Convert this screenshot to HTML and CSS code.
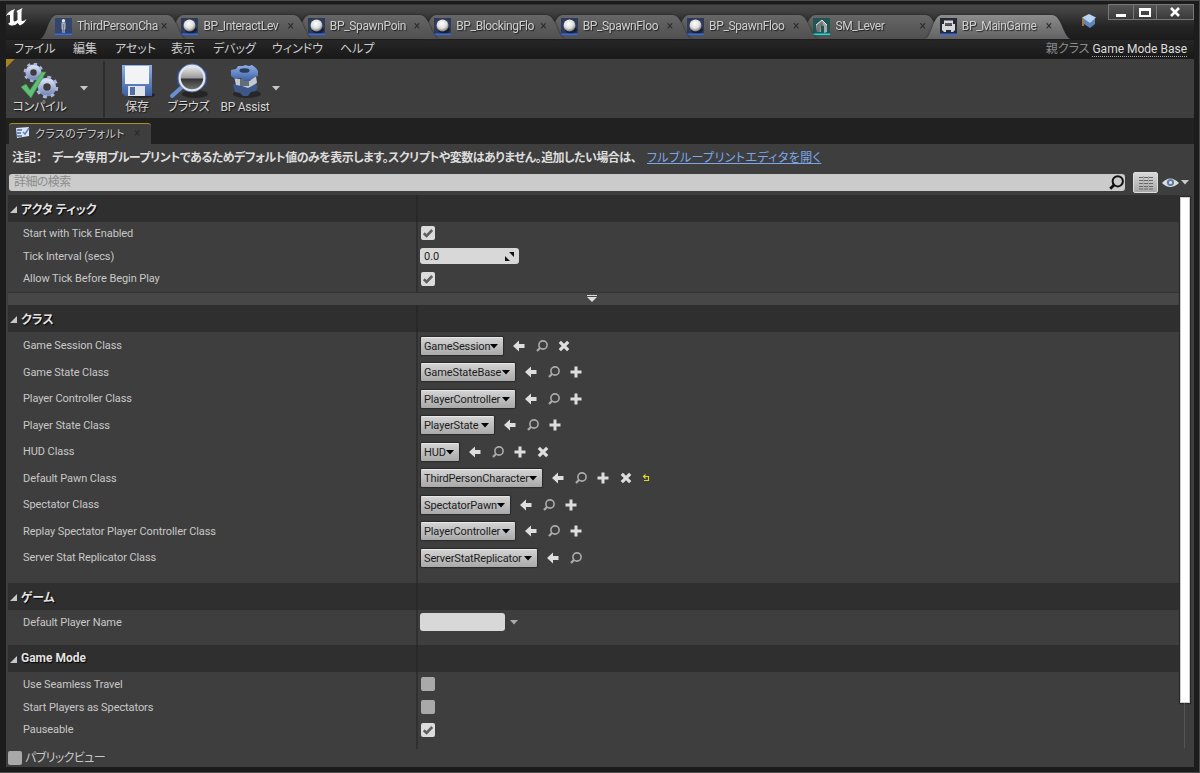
FILE: index.html
```
<!DOCTYPE html>
<html lang="ja">
<head>
  <meta charset="UTF-8" />
  <title>BP_MainGame</title>
  <link rel="stylesheet" href="styles.css">
</head>
<body>
  <!-- Shared icons -->
  <svg class="defs" width="0" height="0">
    <defs>
      <linearGradient id="gearFill" x1="0" y1="0" x2="0" y2="1">
        <stop offset="0" stop-color="#d3dcf3" /><stop offset="1" stop-color="#7e8fbc" />
      </linearGradient>
      <linearGradient id="blueFill" x1="0" y1="0" x2="0" y2="1">
        <stop offset="0" stop-color="#8fb0ea" /><stop offset="1" stop-color="#3d5ea0" />
      </linearGradient>
      <linearGradient id="lensFill" x1="0" y1="0" x2="0" y2="1">
        <stop offset="0" stop-color="#f0f0f0" /><stop offset=".5" stop-color="#9a9a9a" />
        <stop offset=".54" stop-color="#333" /><stop offset="1" stop-color="#777" />
      </linearGradient>
      <radialGradient id="ballFill" cx=".45" cy=".35" r=".65">
        <stop offset="0" stop-color="#fff" /><stop offset=".6" stop-color="#ddd" /><stop offset="1" stop-color="#777" />
      </radialGradient>
    </defs>
    <symbol id="i-ball" viewBox="0 0 17 17">
      <rect width="17" height="17" fill="#2e3a58" /><ellipse cx="10" cy="12" rx="6" ry="3.5" fill="#1a2030" />
      <circle cx="8.5" cy="7.5" r="6" fill="url(#ballFill)" /><rect y="15.500" width="17" height="1.500" fill="#2f6cf0" />
    </symbol>
    <symbol id="i-person" viewBox="0 0 17 17">
      <rect width="17" height="17" fill="#33456d" />
      <circle cx="8.5" cy="2.800" r="1.700" fill="#e4e6ea" /><path d="M6.300 4.500h4.400v6l-.9.500-.3 4H7.500l-.3-4-.9-.5z" fill="#b9bdc7" />
      <path d="M8.500 6v9M6.800 5v5M10.200 5v5" stroke="#596174" stroke-width=".7" /><rect y="15.500" width="17" height="1.500" fill="#2f6cf0" />
    </symbol>
    <symbol id="i-mesh" viewBox="0 0 17 17">
      <rect width="17" height="17" fill="#1f5553" />
      <path d="M3 7l6-5 5 5v7l-3 1V8L8 7v7H4z" fill="#a9a9a9" /><path d="M4 7l5-4 2 5-3-1-1 7H4z" fill="#777" />
      <path d="M3 7l6-5 5 5" fill="none" stroke="#ddd" /><rect y="15.500" width="17" height="1.500" fill="#19e0e0" />
    </symbol>
    <symbol id="i-pad" viewBox="0 0 17 17">
      <rect width="17" height="17" fill="#252a36" />
      <path d="M4 2.500h9V6H4zM2 6h3v2h7V6h3v6l-2 2h-2v-2H6v2H4l-2-2z" fill="#d8d8d8" />
      <path d="M5 5h7v2.500H5z" fill="#555a66" /><rect y="15.500" width="17" height="1.500" fill="#2f6cf0" />
    </symbol>
    <symbol id="i-arrow" viewBox="0 0 12 12"><path d="M0 6l6-5.500v3.500h5.500v4H6v3.500z" /></symbol>
    <symbol id="i-find" viewBox="0 0 12 12">
      <circle cx="7" cy="5" r="4.100" fill="none" stroke="currentColor" stroke-width="1.600" />
      <path d="M4.200 7.800L1 11" stroke="currentColor" stroke-width="2.200" />
    </symbol>
    <symbol id="i-plus" viewBox="0 0 12 12"><path d="M4.500 .5h3v4H11.500v3H7.500v4h-3v-4H.5v-3h4z" /></symbol>
    <symbol id="i-x" viewBox="0 0 12 12"><path d="M1.800 1.800l8.400 8.400M10.200 1.800l-8.400 8.400" stroke="currentColor" stroke-width="3.200" /></symbol>
    <symbol id="i-reset" viewBox="0 0 8 8"><path d="M2 2.500h4.500v4H2M3.500.500l-2 2 2 2" fill="none" stroke="currentColor" stroke-width="1.200" /></symbol>
    <symbol id="i-check" viewBox="0 0 14 14"><path d="M2.800 7.300l2.800 2.700L11.200 4" fill="none" stroke="#606060" stroke-width="2.600" /></symbol>
    <symbol id="i-down" viewBox="0 0 8 5"><path d="M0 0h8L4 4.500z" /></symbol>
    <symbol id="i-gear" viewBox="-10 -10 20 20">
      <circle r="5.400" fill="none" stroke="url(#gearFill)" stroke-width="4.600" />
      <circle r="8.200" fill="none" stroke="#a9b6dc" stroke-width="2.400" stroke-dasharray="3.200 3.240" />
    </symbol>
  </svg>

  <div class="window">
    <div class="titlebar">
      <svg class="logo" viewBox="0 0 22 20">
        <path d="M0 9Q2 4 9 2Q7.500 4 7.500 6V13.500Q8.500 15.500 11.500 13V5.500L10.500 4L16.500 1Q15.500 3 15.500 5V13.500Q17 15 20.500 12Q18.500 16.500 14 18.500L11.500 16Q9.500 19 5 18.500Q3 18 2 16.500Q4 16.500 4 14.500V8Q2.500 7 0 9Z" fill="#fff" />
      </svg>
      <div class="tabs">
        <div class="tab"><div class="tab-body"><svg class="tab-icon"><use href="#i-person" /></svg><span class="tab-name">ThirdPersonCha</span><span class="tab-close">×</span></div></div>
        <div class="tab"><div class="tab-body"><svg class="tab-icon"><use href="#i-ball" /></svg><span class="tab-name">BP_InteractLev</span><span class="tab-close">×</span></div></div>
        <div class="tab"><div class="tab-body"><svg class="tab-icon"><use href="#i-ball" /></svg><span class="tab-name">BP_SpawnPoin</span><span class="tab-close">×</span></div></div>
        <div class="tab"><div class="tab-body"><svg class="tab-icon"><use href="#i-ball" /></svg><span class="tab-name">BP_BlockingFlo</span><span class="tab-close">×</span></div></div>
        <div class="tab"><div class="tab-body"><svg class="tab-icon"><use href="#i-ball" /></svg><span class="tab-name">BP_SpawnFloo</span><span class="tab-close">×</span></div></div>
        <div class="tab"><div class="tab-body"><svg class="tab-icon"><use href="#i-ball" /></svg><span class="tab-name">BP_SpawnFloo</span><span class="tab-close">×</span></div></div>
        <div class="tab"><div class="tab-body"><svg class="tab-icon"><use href="#i-mesh" /></svg><span class="tab-name">SM_Lever</span><span class="tab-close">×</span></div></div>
        <div class="tab active"><div class="tab-body"><svg class="tab-icon"><use href="#i-pad" /></svg><span class="tab-name">BP_MainGame</span><span class="tab-close">×</span></div></div>
      </div>
      <svg class="tutorial" viewBox="0 0 16 16">
        <path d="M3 6v5l6 4 5-4V6z" fill="#5f86b8" /><path d="M1 4.500L8 1l7 3.500L9 10z" fill="#b9d3f2" />
        <path d="M2 5v8" stroke="#c9904f" stroke-width="1.500" />
      </svg>
      <div class="win-buttons">
        <span class="win-btn"><svg width="10" height="11"><rect y="7" width="10" height="3" fill="#fff" /></svg></span>
        <span class="win-btn mid"><svg width="12" height="9"><path d="M1 1h10v7H1z" fill="none" stroke="#fff" stroke-width="2" /><path d="M0 2h12" stroke="#fff" stroke-width="2" /></svg></span>
        <span class="win-btn wide"><svg width="10" height="10"><path d="M1 1l8 8M9 1L1 9" stroke="#fff" stroke-width="2.500" /></svg></span>
      </div>
    </div>

    <div class="menubar">
      <span class="m-file">ファイル</span>
      <span class="m-edit">編集</span>
      <span class="m-asset">アセット</span>
      <span class="m-view">表示</span>
      <span class="m-debug">デバッグ</span>
      <span class="m-window">ウィンドウ</span>
      <span class="m-help">ヘルプ</span>
      <div class="parent-class">親クラス <a>Game Mode Base</a></div>
    </div>

    <div class="toolbar">
      <div class="tool compile">
        <svg width="40" height="36">
          <use href="#i-gear" x="3" y="-1" width="21" height="21" />
          <use href="#i-gear" x="15" y="12" width="24" height="24" />
          <path d="M1 24l5-3 4 6L22 9h4L11 35z" fill="#5fbf73" stroke="#3d8f50" stroke-width=".6" />
        </svg>
        <span>コンパイル</span>
      </div>
      <svg class="tool-arrow"><use href="#i-down" /></svg>
      <div class="separator"></div>
      <div class="tool save">
        <svg width="36" height="36">
          <ellipse cx="22" cy="32" rx="14" ry="3" fill="#222" />
          <path d="M3 2h30v31H6l-3-3z" fill="url(#blueFill)" /><path d="M6 3h24v18H6z" fill="#f2f3f5" />
          <path d="M9 23h17v10H9z" fill="#dfe3ea" /><path d="M11 24h5v8h-5z" fill="#536fa8" />
        </svg>
        <span>保存</span>
      </div>
      <div class="tool browse">
        <svg width="40" height="36">
          <ellipse cx="26" cy="31" rx="13" ry="4" fill="#252525" />
          <path d="M8 7h30v16H8z" fill="#37456a" />
          <path d="M3 33L13 24" stroke="#6d8fd0" stroke-width="4" stroke-linecap="round" />
          <circle cx="23" cy="15" r="12.500" fill="url(#lensFill)" stroke="#dfe6f3" stroke-width="2.500" />
          <circle cx="23" cy="15" r="14" fill="none" stroke="#5c76ad" stroke-width=".8" />
        </svg>
        <span>ブラウズ</span>
      </div>
      <div class="tool assist">
        <svg width="34" height="36">
          <ellipse cx="19" cy="31" rx="14" ry="4" fill="#272727" />
          <path d="M5 22l3-2h18l4 3-2 5-5 1-3 4h-5l-3-3-5-1z" fill="#3d5788" />
          <path d="M6 13l4 3h14l4-3 1 7-5 3-4 2-6-2-6-1z" fill="#c3c7ce" /><path d="M12 16h9v7h-9z" fill="#666c78" />
          <path d="M3 7l5-1 2-3 5 0 2-1 4 1 3-1 4 3 2 3v5l-5 2-3 3h-6l-3-3-6 1-4-3z" fill="url(#blueFill)" />
          <ellipse cx="16.500" cy="7.500" rx="5" ry="2.300" fill="#2b3b5e" />
        </svg>
        <span>BP Assist</span>
      </div>
      <svg class="tool-arrow second"><use href="#i-down" /></svg>
    </div>

    <div class="doc-tabs">
      <div class="doc-tab">
        <svg width="15" height="13"><path d="M1 2l13-1v9L2 12z" fill="#dce5f5" /><path d="M2 4h5M2 7h4M2 10h5" stroke="#4b68a5" stroke-width="1.300" /><path d="M8 6l2 2 4-6" fill="none" stroke="#5c7fc7" stroke-width="1.500" /></svg>
        <span>クラスのデフォルト</span>
        <span class="tab-close">×</span>
      </div>
    </div>

    <div class="panel">
      <div class="note">
        <b class="note-label">注記：</b>
        <b class="note-text">データ専用ブループリントであるためデフォルト値のみを表示します。スクリプトや変数はありません。追加したい場合は、</b>
        <a>フルブループリントエディタを開く</a>
      </div>

      <div class="search-row">
        <div class="search"><span>詳細の検索</span><svg width="15" height="15" viewBox="0 0 12 12"><use href="#i-find" /></svg></div>
        <div class="matrix"><svg width="14" height="14"><path d="M0 1.500h14M0 4.500h14M0 7.500h14M0 10.500h14M0 13h14" stroke="#666" stroke-width="1.200" /><path d="M4.500 0v14M9.500 0v14" stroke="#aaa" /></svg></div>
        <svg class="eye" width="17" height="12"><path d="M0 6Q8-3 17 6Q8 14 0 6z" fill="#dcdcdc" /><circle cx="8.500" cy="5.500" r="3.600" fill="#5f7fa8" /><circle cx="8.500" cy="5.500" r="1.500" fill="#dfe8f4" /></svg>
        <svg class="eye-arrow"><use href="#i-down" /></svg>
      </div>

      <div class="details">
        <div class="sections">
          <div class="header"><i></i><span>アクタ ティック</span></div>
          <div class="rows tick">
            <div class="row"><label>Start with Tick Enabled</label><div class="value"><span class="check"><svg><use href="#i-check" /></svg></span></div></div>
            <div class="row"><label>Tick Interval (secs)</label><div class="value"><span class="number">0.0<svg width="9" height="9"><path d="M4 0h5v5zM0 4v5h5z" fill="#111" /></svg></span></div></div>
            <div class="row"><label>Allow Tick Before Begin Play</label><div class="value"><span class="check"><svg><use href="#i-check" /></svg></span></div></div>
          </div>
          <div class="expander"><svg width="10" height="7"><path d="M0 .500h10" stroke="#ddd" /><path d="M0 2h10L5 7z" fill="#ddd" /></svg></div>

          <div class="header"><i></i><span>クラス</span></div>
          <div class="rows class">
            <div class="row"><label>Game Session Class</label><div class="value"><span class="combo w83">GameSession<svg><use href="#i-down" /></svg></span><svg class="act"><use href="#i-arrow" /></svg><svg class="act find"><use href="#i-find" /></svg><svg class="act"><use href="#i-x" /></svg></div></div>
            <div class="row"><label>Game State Class</label><div class="value"><span class="combo w95">GameStateBase<svg><use href="#i-down" /></svg></span><svg class="act"><use href="#i-arrow" /></svg><svg class="act find"><use href="#i-find" /></svg><svg class="act"><use href="#i-plus" /></svg></div></div>
            <div class="row"><label>Player Controller Class</label><div class="value"><span class="combo w95">PlayerController<svg><use href="#i-down" /></svg></span><svg class="act"><use href="#i-arrow" /></svg><svg class="act find"><use href="#i-find" /></svg><svg class="act"><use href="#i-plus" /></svg></div></div>
            <div class="row"><label>Player State Class</label><div class="value"><span class="combo w74">PlayerState<svg><use href="#i-down" /></svg></span><svg class="act"><use href="#i-arrow" /></svg><svg class="act find"><use href="#i-find" /></svg><svg class="act"><use href="#i-plus" /></svg></div></div>
            <div class="row"><label>HUD Class</label><div class="value"><span class="combo w39">HUD<svg><use href="#i-down" /></svg></span><svg class="act"><use href="#i-arrow" /></svg><svg class="act find"><use href="#i-find" /></svg><svg class="act"><use href="#i-plus" /></svg><svg class="act"><use href="#i-x" /></svg></div></div>
            <div class="row"><label>Default Pawn Class</label><div class="value"><span class="combo w122">ThirdPersonCharacter<svg><use href="#i-down" /></svg></span><svg class="act"><use href="#i-arrow" /></svg><svg class="act find"><use href="#i-find" /></svg><svg class="act"><use href="#i-plus" /></svg><svg class="act"><use href="#i-x" /></svg><svg class="reset"><use href="#i-reset" /></svg></div></div>
            <div class="row"><label>Spectator Class</label><div class="value"><span class="combo w90">SpectatorPawn<svg><use href="#i-down" /></svg></span><svg class="act"><use href="#i-arrow" /></svg><svg class="act find"><use href="#i-find" /></svg><svg class="act"><use href="#i-plus" /></svg></div></div>
            <div class="row"><label>Replay Spectator Player Controller Class</label><div class="value"><span class="combo w95">PlayerController<svg><use href="#i-down" /></svg></span><svg class="act"><use href="#i-arrow" /></svg><svg class="act find"><use href="#i-find" /></svg><svg class="act"><use href="#i-plus" /></svg></div></div>
            <div class="row"><label>Server Stat Replicator Class</label><div class="value"><span class="combo w117">ServerStatReplicator<svg><use href="#i-down" /></svg></span><svg class="act"><use href="#i-arrow" /></svg><svg class="act find"><use href="#i-find" /></svg></div></div>
          </div>

          <div class="header"><i></i><span>ゲーム</span></div>
          <div class="rows game">
            <div class="row"><label>Default Player Name</label><div class="value"><span class="text-input"></span><svg class="input-arrow"><use href="#i-down" /></svg></div></div>
          </div>

          <div class="header"><i></i><span>Game Mode</span></div>
          <div class="rows mode">
            <div class="row"><label>Use Seamless Travel</label><div class="value"><span class="check off"></span></div></div>
            <div class="row"><label>Start Players as Spectators</label><div class="value"><span class="check off"></span></div></div>
            <div class="row"><label>Pauseable</label><div class="value"><span class="check"><svg><use href="#i-check" /></svg></span></div></div>
          </div>
        </div>
        <div class="scrollbar"><div class="thumb"></div><div class="track"></div></div>
      </div>

      <div class="footer"><span class="check off"></span><span>パブリックビュー</span></div>
    </div>
  </div>
</body>
</html>
```
FILE: styles.css
```
* {
  box-sizing: border-box;
}
body {
  margin: 0;
  font-family: Roboto, "Noto Sans CJK JP", sans-serif;
  font-size: 11px;
  font-feature-settings: "palt";
  color: #c8c8c8;
  background: #1c1c1c;
}
svg {
  display: block;
  flex: none;
  fill: currentColor;
}
.defs {
  position: absolute;
}
.window {
  width: 1200px;
  height: 773px;
  padding: 0 5px 5px 6px;
  border: 1px solid #4c4c4c;
  border-width: 1px 1px 1px 0;
  background: #1c1c1c;
  display: flex;
  flex-direction: column;
  overflow: hidden;
}

/* Title bar */
.titlebar {
  height: 38px;
  margin-top: 1px;
  flex: none;
  display: flex;
  background: linear-gradient(#1c1c1c 2px, #484848 3px, #404040 10px, #252525 24px, #1b1b1b);
}
.logo {
  width: 22px;
  height: 20px;
  margin-top: 5px;
}
.tabs {
  display: flex;
  margin: 13px 0 0 12px;
  width: 1031px;
  flex: none;
}
.tab {
  width: 146px;
  height: 24px;
  margin-right: -19.600px;
  flex: none;
  filter: drop-shadow(0 0 1px #222);
}
.tab:nth-child(1) { z-index: 7; }
.tab:nth-child(2) { z-index: 6; }
.tab:nth-child(3) { z-index: 5; }
.tab:nth-child(4) { z-index: 4; }
.tab:nth-child(5) { z-index: 3; }
.tab:nth-child(6) { z-index: 2; }
.tab:nth-child(7) { z-index: 1; }
.tab.active { z-index: 8; }
.tab-body {
  height: 100%;
  padding: 0 0 2px 15px;
  display: flex;
  align-items: center;
  background: linear-gradient(#666, #505050);
  clip-path: path("M0 24C7 22 8 0 17 0H127C137 0 138 22 146 24Z");
}
.active .tab-body {
  background: linear-gradient(#8c8c8c, #626262);
}
.tab-icon {
  width: 17px;
  height: 17px;
  margin-top: 1px;
}
.tab-name {
  width: 81px;
  margin-left: 5px;
  white-space: nowrap;
  font-size: 12px;
  letter-spacing: -.350px;
  color: #d0d0d0;
  text-shadow: 1px 1px 1px #222;
}
.tab-close {
  margin-left: 3px;
  font-size: 12px;
  color: #2b2b2b;
}
.tutorial {
  width: 16px;
  height: 16px;
  margin: 11px 0 0 10px;
}
.win-buttons {
  display: flex;
  height: 16px;
  margin: 2px 0 0 11px;
}
.win-btn {
  width: 25px;
  height: 16px;
  flex: none;
  display: flex;
  align-items: center;
  justify-content: center;
  border: 1px solid #777;
  border-right: 0;
  background: linear-gradient(#555, #3a3a3a);
}
.win-btn.mid {
  width: 23px;
}
.win-btn.wide {
  width: 38px;
  border-right: 1px solid #777;
}

/* Menu */
.menubar {
  height: 18px;
  flex: none;
  display: flex;
  align-items: center;
  padding: 0 7px 1px 8px;
  font-size: 12px;
  line-height: 16px;
  color: #ccc;
  background: linear-gradient(#262626, #191919);
  white-space: nowrap;
}
.menubar > span {
  flex: none;
}
.m-file { width: 59px; }
.m-edit { width: 42px; }
.m-asset { width: 56px; }
.m-view { width: 42px; }
.m-debug { width: 59px; }
.m-window { width: 68px; }
.parent-class {
  margin-left: auto;
  color: #8a8a8a;
}
.parent-class a {
  color: #ddd;
  border-bottom: 1px dotted #aaa;
}

/* Toolbar */
.toolbar {
  height: 59px;
  margin-top: 1px;
  flex: none;
  display: flex;
  background: linear-gradient(135deg, #a8821c 6px, transparent 6.500px), #3e3e3e;
}
.tool {
  display: flex;
  flex-direction: column;
  align-items: center;
  padding-top: 4px;
  font-size: 12px;
  line-height: 15px;
  letter-spacing: -.250px;
  color: #d8d8d8;
  text-shadow: 1px 1px 1px #111;
  white-space: nowrap;
}
.tool span {
  padding-top: 1px;
}
.compile { width: 67px; }
.save { width: 52px; margin-left: 6px; }
.browse { width: 51px; }
.assist { width: 62px; }
.tool-arrow {
  width: 8px;
  height: 5px;
  margin: 27px 0 0 7px;
}
.tool-arrow.second {
  margin-left: -4px;
}
.separator {
  width: 2px;
  height: 56px;
  margin: 2px 0 0 15px;
  background: #2c2c2c;
}
.doc-tabs {
  height: 26px;
  flex: none;
  padding: 5px 0 0 3px;
  background: #212121;
}
.doc-tab {
  width: 142px;
  height: 21px;
  display: flex;
  align-items: center;
  padding: 0 0 3px 6px;
  gap: 5px;
  font-size: 11px;
  letter-spacing: .4px;
  border-top: 1px solid #a8921c;
  border-radius: 3px 3px 0 0;
  background: #3e3e3e;
  text-shadow: 1px 1px 1px #111;
  white-space: nowrap;
}
.doc-tab .tab-close {
  margin-left: 4px;
  text-shadow: none;
}

/* Details panel */
.panel {
  flex: 1;
  min-height: 0;
  background: #3e3e3e;
}
.note {
  height: 28px;
  padding: 0 0 4px 6px;
  display: flex;
  align-items: center;
  font-size: 12px;
  white-space: nowrap;
  color: #ddd;
}
.note-label {
  width: 40px;
  flex: none;
}
.note-text {
  width: 595px;
  flex: none;
  letter-spacing: -.520px;
}
.note a {
  color: #7ba6e8;
  letter-spacing: .4px;
  text-decoration: underline;
}
.search-row {
  height: 23px;
  display: flex;
  align-items: center;
  padding: 0 0 2px 3px;
}
.search {
  width: 1116px;
  height: 17px;
  display: flex;
  align-items: center;
  justify-content: space-between;
  padding: 0 1px 0 5px;
  border-radius: 3px;
  background: #cbcbcb;
  font-size: 12px;
  line-height: 14px;
  letter-spacing: -.6px;
  color: #8c8c8c;
}
.search span {
  padding-bottom: 2px;
}
.search svg {
  color: #111;
}
.matrix {
  width: 25px;
  height: 21px;
  margin-left: 8px;
  display: flex;
  align-items: center;
  justify-content: center;
  border-radius: 2px;
  border: 1px solid #ddd;
  background: linear-gradient(#d8d8d8, #a8a8a8);
}
.eye { margin-left: 4px; }
.eye-arrow {
  width: 8px;
  height: 5px;
  margin-left: 2px;
}
.details {
  display: flex;
  height: 555px;
  padding-left: 2px;
}
.sections {
  width: 1171px;
}
.header {
  height: 27px;
  padding-bottom: 1px;
  display: flex;
  align-items: center;
  font-size: 12px;
  font-weight: bold;
  color: #e2e2e2;
  text-shadow: 1px 1px 1px #000;
  background: linear-gradient(#282828, #282828) 408px 0 / 2px 100% no-repeat, #2f2f2f;
}
.header i {
  width: 7px;
  height: 7px;
  margin: 3px 4px 0 2px;
  background: #c8c8c8;
  clip-path: polygon(100% 0, 100% 100%, 0 100%);
}
.rows {
  background: linear-gradient(#303030, #303030) 408px 0 / 2px 100% no-repeat;
}
.row {
  display: flex;
  align-items: center;
  height: 22.700px;
}
.row label {
  width: 412px;
  padding-left: 15px;
  letter-spacing: -.080px;
}
.tick { height: 70px; }
.class { height: 251px; padding-top: .5px; }
.class .row { height: 26.500px; }
.game { height: 35px; padding-top: 1px; }
.mode { height: 77px; padding-top: 1px; }
.value {
  display: flex;
  align-items: center;
}
.check {
  width: 14px;
  height: 14px;
  margin-left: 1px;
  border-radius: 2px;
  background: #dcdcdc;
}
.check svg {
  width: 14px;
  height: 14px;
}
.check.off {
  background: #a9a9a9;
}
.number {
  width: 99px;
  height: 16px;
  padding: 0 5px 0 4px;
  display: flex;
  align-items: center;
  justify-content: space-between;
  border-radius: 3px;
  background: #d8d8d8;
  color: #222;
}
.expander {
  height: 13px;
  display: flex;
  align-items: center;
  justify-content: center;
  padding: 0 3px 2px 0;
  border-top: 1px solid #333;
  background: #474747;
}
.combo {
  height: 18px;
  margin-left: 1px;
  margin-right: 10px;
  padding: 0 5px 0 3px;
  display: flex;
  align-items: center;
  justify-content: space-between;
  border-radius: 1px;
  border-top: 1px solid #e8e8e8;
  background: linear-gradient(#d2d2d2, #a9a9a9);
  box-shadow: 0 0 1px 1px #2a2a2a;
  letter-spacing: -.120px;
  color: #1c1c1c;
}
.combo svg {
  width: 8px;
  height: 5px;
  color: #000;
}
.w39 { width: 38px; }
.w74 { width: 73px; }
.w83 { width: 82px; }
.w90 { width: 89px; }
.w95 { width: 94px; }
.w117 { width: 116px; }
.w122 { width: 121px; }
.act {
  width: 12px;
  height: 12px;
  margin-right: 10.700px;
  color: #dedede;
}
.act.find {
  color: #ababab;
}
.reset {
  width: 8px;
  height: 8px;
  margin-left: -1px;
  color: #d8d822;
}
.text-input {
  width: 85px;
  height: 18px;
  border-radius: 3px;
  background: #d8d8d8;
}
.input-arrow {
  width: 8px;
  height: 5px;
  margin-left: 5px;
  color: #aaa;
}
.scrollbar {
  width: 12px;
  padding-top: 2px;
}
.thumb {
  width: 10px;
  height: 506px;
  margin-left: 1px;
  background: #fff;
  border: 1px solid #ccc;
  box-shadow: 0 0 1px 1px #2a2a2a;
}
.track {
  width: 1px;
  height: 45px;
  margin-left: 5px;
  background: #555;
}
.footer {
  height: 16px;
  display: flex;
  align-items: center;
  gap: 3px;
  padding-left: 1px;
  font-size: 12px;
  line-height: 14px;
  letter-spacing: -.6px;
}
.footer span:last-child {
  padding-bottom: 1px;
}
```
